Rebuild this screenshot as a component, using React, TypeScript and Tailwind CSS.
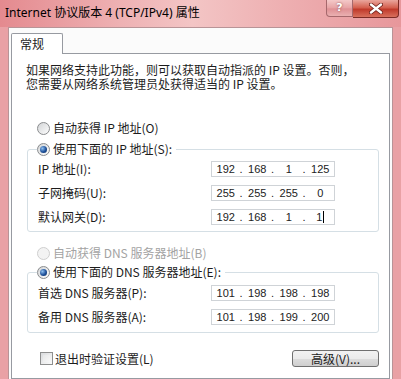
import { Fragment } from "react";

// Win7 风格的 "Internet 协议版本 4 (TCP/IPv4) 属性" 对话框
const cjk = "font-['Noto_Sans_CJK_SC','Noto_Sans',sans-serif]";

function Radio({ checked, disabled }: { checked?: boolean; disabled?: boolean }) {
  return (
    <span
      className={`flex h-[13px] w-[13px] shrink-0 items-center justify-center rounded-full border ${
        disabled
          ? "border-[#cfcfcf] bg-[#f3f3f3]"
          : "border-[#8a8c8e] bg-[linear-gradient(135deg,#d3d5d7,#fdfdfd)]"
      }`}
    >
      {checked && (
        <span className="h-[7px] w-[7px] rounded-full bg-[radial-gradient(circle_at_35%_35%,#8fc0f0,#1d4f99_55%,#0b2a5a)]" />
      )}
    </span>
  );
}

function IpBox({ parts, caret }: { parts: string[]; caret?: boolean }) {
  return (
    <div className="grid h-[16px] w-[124px] grid-cols-[1fr_4px_1fr_4px_1fr_4px_1fr] items-center border border-[#cfd3d7] bg-white font-['Liberation_Sans',sans-serif] text-[11px] leading-none text-[#222]">
      {parts.map((p, i) => (
        <Fragment key={i}>
          {i > 0 && <span className="text-left">.</span>}
          <span className="flex items-center justify-center">
            {p}
            {caret && i === 3 && <span className="ml-px inline-block h-[12px] w-px bg-black" />}
          </span>
        </Fragment>
      ))}
    </div>
  );
}

function Row({ label, parts, caret }: { label: string; parts: string[]; caret?: boolean }) {
  return (
    <div className="flex h-[16px] items-center">
      <span className="w-[173px] shrink-0">{label}</span>
      <IpBox parts={parts} caret={caret} />
    </div>
  );
}

function Group({ legend, children }: { legend: string; children: React.ReactNode }) {
  return (
    <fieldset className="ml-[15px] mr-[10px] rounded-[3px] border border-[#d5dfe5] pl-[10px]">
      <legend className="-ml-px flex h-[14px] items-center gap-[3px] pr-[4px]">
        <Radio checked />
        <span>{legend}</span>
      </legend>
      {children}
    </fieldset>
  );
}

export default function App() {
  return (
    <div className="flex h-[379px] w-[401px] flex-col overflow-hidden bg-[#e9a1a5]">
      {/* 标题栏 */}
      <div className="flex h-[27px] shrink-0 items-start justify-between bg-[linear-gradient(90deg,#e48a8f_0%,#eeb1b3_30%,#f3c5c5_48%,#eeb0b2_70%,#e7979b_100%)] pr-[2px]">
        <span className="mt-[6px] pl-[5px] font-['Noto_Sans','Noto_Sans_CJK_SC',sans-serif] text-[12px] leading-[14px] text-black">
          Internet 协议版本 4 (TCP/IPv4) 属性
        </span>
        <div className="flex">
          <div className="flex h-[17px] w-[27px] items-center justify-center rounded-bl-[4px] border border-t-0 border-[#a5686c] bg-[linear-gradient(#f4c9c9,#e7a3a5_50%,#df9094_55%,#eab0b1)] font-['DejaVu_Sans',sans-serif] text-[11px] font-bold text-white [text-shadow:0_0_2px_#7a3a3e]">
            ?
          </div>
          <div className="flex h-[18px] w-[46px] items-center justify-center rounded-br-[4px] border border-l-0 border-t-0 border-[#7d2b25] bg-[linear-gradient(#eaa69d,#d4604f_45%,#c03a2b_55%,#d9705d)]">
            <svg width="14" height="11" viewBox="0 0 14 11">
              <path d="M2 1.5 L12 9.5 M12 1.5 L2 9.5" stroke="#6b1e18" strokeWidth="4" strokeLinecap="round" />
              <path d="M2 1.5 L12 9.5 M12 1.5 L2 9.5" stroke="#ffffff" strokeWidth="2.4" strokeLinecap="round" />
            </svg>
          </div>
        </div>
      </div>

      {/* 对话框主体 */}
      <div className={`mx-[8px] flex flex-1 flex-col border border-b-0 border-[#b89497] bg-[#fbfbfb] px-[2px] pt-[5px] ${cjk} text-[12px] leading-[14px] text-[#1c1c1c]`}>
        {/* 选项卡 */}
        <div className="flex">
          <div className="relative z-10 -mb-px flex h-[21px] w-[52px] items-center rounded-t-[2px] border border-b-0 border-[#979aa1] bg-white pl-[8px]">
            常规
          </div>
        </div>
        <div className="flex flex-1 flex-col border border-[#979aa1] bg-white">
          <div className="flex flex-col pl-[14px] pt-[9px]">
            <span className="block h-[14px] leading-[14px]">如果网络支持此功能，则可以获取自动指派的 IP 设置。否则，</span>
            <span className="block h-[14px] leading-[14px]">您需要从网络系统管理员处获得适当的 IP 设置。</span>
          </div>

          <div className="mt-[30px] flex h-[14px] items-center gap-[3px] pl-[25px]">
            <Radio />
            <span>自动获得 IP 地址(O)</span>
          </div>

          <div className="mt-[7px]">
            <Group legend="使用下面的 IP 地址(S):">
              <div className="flex flex-col gap-[8px] pb-[6px] pt-[5px]">
                <Row label="IP 地址(I):" parts={["192", "168", "1", "125"]} />
                <Row label="子网掩码(U):" parts={["255", "255", "255", "0"]} />
                <Row label="默认网关(D):" parts={["192", "168", "1", "1"]} caret />
              </div>
            </Group>
          </div>

          <div className="mt-[14px] flex h-[14px] items-center gap-[3px] pl-[25px] text-[#a3a3a3]">
            <Radio disabled />
            <span>自动获得 DNS 服务器地址(B)</span>
          </div>

          <div className="mt-[5px]">
            <Group legend="使用下面的 DNS 服务器地址(E):">
              <div className="flex flex-col gap-[8px] pb-[7px] pt-[6px]">
                <Row label="首选 DNS 服务器(P):" parts={["101", "198", "198", "198"]} />
                <Row label="备用 DNS 服务器(A):" parts={["101", "198", "199", "200"]} />
              </div>
            </Group>
          </div>

          <div className="mr-[10px] mt-[17px] flex items-center justify-between pl-[28px]">
            <div className="flex items-center gap-[2px]">
              <span className="h-[13px] w-[13px] border border-[#8e8f8f] bg-[linear-gradient(135deg,#d9dbdd,#fbfbfb)] p-[2px]">
                <span className="block h-full w-full bg-[linear-gradient(135deg,#e6e7e8,#f8f8f8)]" />
              </span>
              <span>退出时验证设置(L)</span>
            </div>
            <button
              type="button"
              className="flex h-[17px] w-[87px] items-center justify-center rounded-[3px] border border-[#707070] bg-[linear-gradient(#f2f2f2,#ebebeb_50%,#dddddd_51%,#cfcfcf)] text-[12px] leading-none text-[#1c1c1c]"
            >
              高级(V)...
            </button>
          </div>
        </div>
      </div>
    </div>
  );
}
